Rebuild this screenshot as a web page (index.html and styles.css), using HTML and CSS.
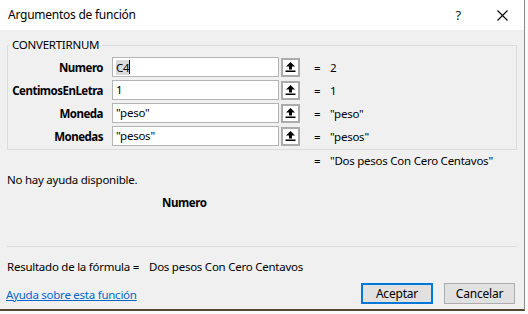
FILE: index.html
```html
<!DOCTYPE html>
<html>
<head>
<meta charset="utf-8">
<title>Argumentos de función</title>
<link rel="stylesheet" href="styles.css">
</head>
<body>
<div class="dialog">
  <div class="titlebar">
    <span class="title">Argumentos de función</span>
    <span class="help">?</span>
    <span class="close">
      <svg width="11" height="11" viewBox="0 0 11 11"><path d="M0.5 0.5 L10.5 10.5 M10.5 0.5 L0.5 10.5" stroke="#000" stroke-width="1.1" fill="none"/></svg>
    </span>
  </div>

  <div class="content">
    <fieldset class="args">
      <legend>CONVERTIRNUM</legend>

      <div class="arg">
        <label>Numero</label>
        <div class="field"><span class="sel">C4</span><span class="caret"></span></div>
        <button class="ref"><svg width="11" height="10" viewBox="0 0 11 10"><path d="M5.5 0 L10 4.5 H7 V7.5 H4 V4.5 H1 Z" fill="#000"/><rect x="0.5" y="8.5" width="10" height="1.5" fill="#000"/></svg></button>
        <span class="eq">=</span>
        <span class="val">2</span>
      </div>

      <div class="arg">
        <label>CentimosEnLetra</label>
        <div class="field">1</div>
        <button class="ref"><svg width="11" height="10" viewBox="0 0 11 10"><path d="M5.5 0 L10 4.5 H7 V7.5 H4 V4.5 H1 Z" fill="#000"/><rect x="0.5" y="8.5" width="10" height="1.5" fill="#000"/></svg></button>
        <span class="eq">=</span>
        <span class="val">1</span>
      </div>

      <div class="arg">
        <label>Moneda</label>
        <div class="field">"peso"</div>
        <button class="ref"><svg width="11" height="10" viewBox="0 0 11 10"><path d="M5.5 0 L10 4.5 H7 V7.5 H4 V4.5 H1 Z" fill="#000"/><rect x="0.5" y="8.5" width="10" height="1.5" fill="#000"/></svg></button>
        <span class="eq">=</span>
        <span class="val">"peso"</span>
      </div>

      <div class="arg">
        <label>Monedas</label>
        <div class="field">"pesos"</div>
        <button class="ref"><svg width="11" height="10" viewBox="0 0 11 10"><path d="M5.5 0 L10 4.5 H7 V7.5 H4 V4.5 H1 Z" fill="#000"/><rect x="0.5" y="8.5" width="10" height="1.5" fill="#000"/></svg></button>
        <span class="eq">=</span>
        <span class="val">"pesos"</span>
      </div>
    </fieldset>

    <div class="total"><span class="eq">=</span><span class="val">"Dos pesos Con Cero Centavos"</span></div>

    <p class="desc">No hay ayuda disponible.</p>
    <p class="argname">Numero</p>

    <hr class="sep">

    <div class="result"><span class="result-label">Resultado de la fórmula =</span><span>Dos pesos Con Cero Centavos</span></div>

    <div class="footer">
      <a href="#" class="helplink">Ayuda sobre esta función</a>
      <button class="btn btn-primary">Aceptar</button>
      <button class="btn">Cancelar</button>
    </div>
  </div>
</div>
</body>
</html>
```

FILE: styles.css
```css
html, body {
  margin: 0;
  padding: 0;
}

body {
  width: 528px;
  height: 314px;
  overflow: hidden;
  background: #fbfbfb;
  font-family: "Noto Sans", "Open Sans", sans-serif;
  font-size: 11.5px;
  letter-spacing: -0.25px;
  color: #000;
  white-space: nowrap;
}

/* the dialog window */
.dialog {
  width: 524px;
  height: 309px;
  background: #f0f0f0;
  border-right: 1px solid #8a8a8a;
  border-bottom: 2px solid #4f4936;
}

.titlebar {
  height: 30px;
  background: #fff;
  display: flex;
  align-items: center;
}

.title {
  flex: 1;
  padding-left: 8px;
  font-size: 12px;
  line-height: 14px;
}

.help {
  font-size: 13px;
  margin-right: 36px;
  color: #222;
}

.close {
  display: flex;
  margin-right: 16px;
}

.content {
  padding: 0 7px;
}

/* group box with the arguments */
.args {
  margin: 8px 0 0;
  padding: 5px 0 3px;
  border: 1px solid #dcdcdc;
  min-width: 0;
}

.args legend {
  margin-left: 1px;
  padding: 0 3px;
  line-height: 14px;
}

.arg {
  display: flex;
  align-items: center;
  height: 20px;
  margin-bottom: 3px;
}

.arg:last-child {
  margin-bottom: 0;
}

.arg label {
  width: 95px;
  text-align: right;
  font-weight: bold;
  letter-spacing: -0.5px;
}

.field {
  box-sizing: border-box;
  width: 167px;
  height: 20px;
  margin-left: 9px;
  padding: 0 3px;
  background: #fff;
  border: 1px solid #b4b4b4;
  line-height: 18px;
  display: flex;
  align-items: center;
}

.sel {
  background: #dadada;
  line-height: 15px;
}

.caret {
  width: 1px;
  height: 14px;
  background: #000;
}

.ref {
  box-sizing: border-box;
  width: 19px;
  height: 19px;
  margin-left: 2px;
  padding: 0;
  background: #fff;
  border: 2px solid #ababab;
  display: flex;
  align-items: center;
  justify-content: center;
}

.eq {
  width: 16px;
  margin-left: 14px;
}

.total {
  display: flex;
  margin-top: 4px;
  line-height: 14px;
  padding-left: 293px;
}

.desc {
  margin: 5px 0 0;
  line-height: 14px;
}

.argname {
  margin: 9px 0 0;
  padding-left: 155px;
  font-weight: bold;
  letter-spacing: -0.4px;
  line-height: 14px;
}

.sep {
  margin: 36px 0 0;
  border: none;
  border-top: 1px solid #dcdcdc;
  height: 0;
}

.result {
  display: flex;
  margin-top: 13px;
  line-height: 14px;
}

.result-label {
  width: 142px;
}

.footer {
  display: flex;
  align-items: center;
  margin-top: 9px;
  padding-right: 2px;
}

.helplink {
  margin-left: -1px;
  padding-top: 3px;
  color: #0066cc;
  line-height: 14px;
}

.btn {
  box-sizing: border-box;
  width: 71px;
  height: 21px;
  margin-left: 11px;
  padding: 0;
  background: #e1e1e1;
  border: 1px solid #adadad;
  font-family: inherit;
  font-size: 12px;
  letter-spacing: -0.2px;
  color: #000;
}

.btn-primary {
  width: 72px;
  margin-left: auto;
  border: 2px solid #0078d7;
}
```
